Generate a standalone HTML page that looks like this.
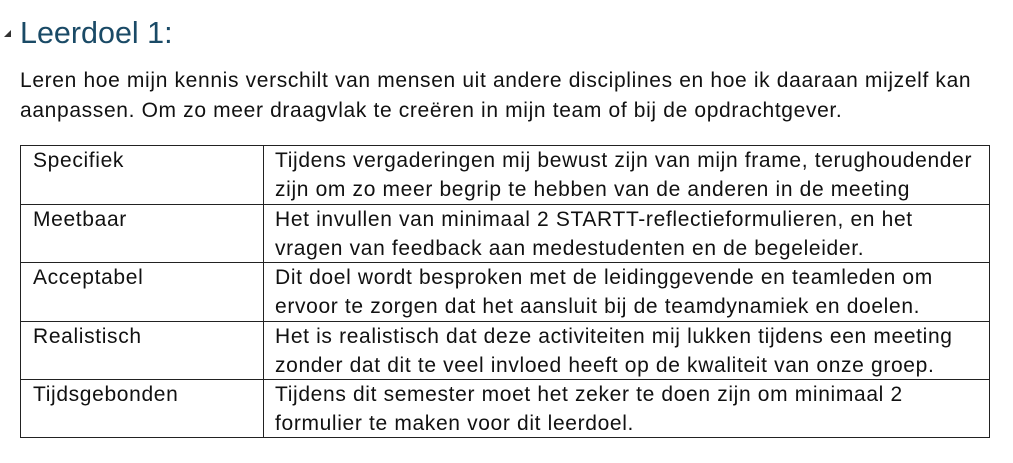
<!DOCTYPE html>
<html><head><meta charset="utf-8"><style>
body{margin:0;width:1013px;height:463px;background:#fff;position:relative;overflow:hidden;font-family:"Liberation Sans",sans-serif;color:#111}
.t{position:absolute;white-space:nowrap;font-size:21px;letter-spacing:0.65px;line-height:29px}
h1{position:absolute;left:20px;top:14px;margin:0;font-weight:normal;font-size:30.5px;color:#1a4a66;line-height:38px}
.tri{position:absolute;left:4px;top:30px;width:0;height:0;border-left:7px solid transparent;border-bottom:7px solid #333}
.hl{position:absolute;left:20px;width:970px;height:1px;background:#222}
.vl{position:absolute;top:145px;height:293px;width:1px;background:#222}
</style></head><body>
<div class="tri"></div>
<h1>Leerdoel 1:</h1>
<div class="t" style="left:20px;top:66px">Leren hoe mijn kennis verschilt van mensen uit andere disciplines en hoe ik daaraan mijzelf kan</div>
<div class="t" style="left:20px;top:96px">aanpassen. Om zo meer draagvlak te creëren in mijn team of bij de opdrachtgever.</div>
<div class="hl" style="top:145px"></div>
<div class="hl" style="top:204px"></div>
<div class="hl" style="top:262px"></div>
<div class="hl" style="top:321px"></div>
<div class="hl" style="top:379px"></div>
<div class="hl" style="top:437px"></div>
<div class="vl" style="left:20px"></div>
<div class="vl" style="left:263px"></div>
<div class="vl" style="left:989px"></div>
<div class="t" style="left:33px;top:146px">Specifiek</div>
<div class="t" style="left:275px;top:146px">Tijdens vergaderingen mij bewust zijn van mijn frame, terughoudender<br>zijn om zo meer begrip te hebben van de anderen in de meeting</div>
<div class="t" style="left:33px;top:205px">Meetbaar</div>
<div class="t" style="left:275px;top:205px">Het invullen van minimaal 2 STARTT-reflectieformulieren, en het<br>vragen van feedback aan medestudenten en de begeleider.</div>
<div class="t" style="left:33px;top:263px">Acceptabel</div>
<div class="t" style="left:275px;top:263px">Dit doel wordt besproken met de leidinggevende en teamleden om<br>ervoor te zorgen dat het aansluit bij de teamdynamiek en doelen.</div>
<div class="t" style="left:33px;top:322px">Realistisch</div>
<div class="t" style="left:275px;top:322px">Het is realistisch dat deze activiteiten mij lukken tijdens een meeting<br>zonder dat dit te veel invloed heeft op de kwaliteit van onze groep.</div>
<div class="t" style="left:33px;top:380px">Tijdsgebonden</div>
<div class="t" style="left:275px;top:380px">Tijdens dit semester moet het zeker te doen zijn om minimaal 2<br>formulier te maken voor dit leerdoel.</div>
</body></html>
